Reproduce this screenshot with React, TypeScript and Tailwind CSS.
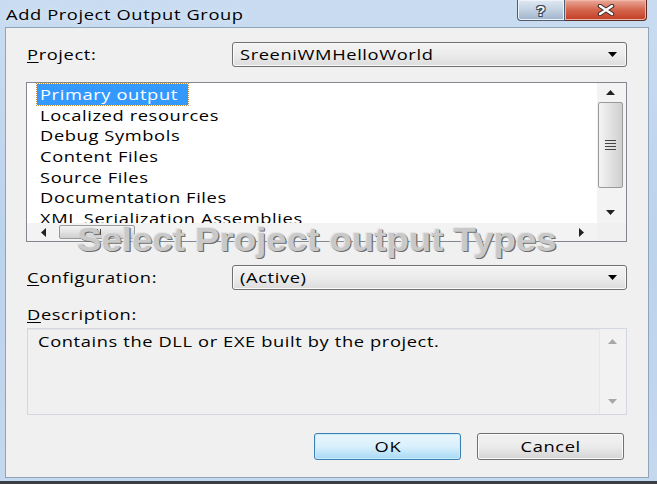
import type { ReactNode } from "react";

const items = [
  "Primary output",
  "Localized resources",
  "Debug Symbols",
  "Content Files",
  "Source Files",
  "Documentation Files",
  "XML Serialization Assemblies",
];

// the screenshot is stretched sideways, so the text gets widened to match
function T({ children, center = false }: { children: ReactNode; center?: boolean }) {
  return (
    <span className={`inline-block whitespace-nowrap scale-x-[1.22] ${center ? "origin-center" : "origin-left"}`}>
      {children}
    </span>
  );
}

function DownArrow({ color = "#000" }: { color?: string }) {
  return (
    <svg width="9" height="5" viewBox="0 0 9 5">
      <path d="M0 0h9L4.5 5z" fill={color} />
    </svg>
  );
}

function Combo({ value }: { value: string }) {
  return (
    <div className="flex h-[25px] flex-1 items-center justify-between rounded-[3px] border border-[#707070] bg-gradient-to-b from-[#f4f4f4] via-[#ececec] to-[#dcdcdc] pl-[7px] pr-[9px] shadow-[inset_0_0_0_1px_#fafafa]">
      <T>{value}</T>
      <DownArrow />
    </div>
  );
}

function Label({ first, rest }: { first: string; rest: string }) {
  return (
    <span className="w-[205px] shrink-0">
      <T>
        <span className="underline underline-offset-2">{first}</span>
        {rest}
      </T>
    </span>
  );
}

function ListBox() {
  return (
    <div className="ml-[-1px] grid h-[160px] grid-cols-[1fr_29px] grid-rows-[1fr_18px] border border-[#828790] bg-white">
      {/* items */}
      <div className="overflow-hidden pl-[10px] pt-[1px]">
        {items.map((item, i) => (
          <div key={item} className="h-[20.7px] leading-[20.7px] whitespace-nowrap">
            {i === 0 ? (
              <span className="inline-block w-[151px] bg-[#3399ff] pl-[3px] text-white outline-1 outline-dotted outline-[#c98a3a]">
                <T>{item}</T>
              </span>
            ) : (
              <span className="pl-[3px]">
                <T>{item}</T>
              </span>
            )}
          </div>
        ))}
      </div>
      {/* vertical scrollbar */}
      <div className="flex flex-col items-stretch bg-[#f3f3f3] pr-[2px]">
        <div className="flex h-[19px] items-center justify-center">
          <svg width="9" height="5" viewBox="0 0 9 5">
            <path d="M0 5h9L4.5 0z" fill="#222" />
          </svg>
        </div>
        <div className="mx-[1px] flex h-[86px] items-center justify-center rounded-[2px] border border-[#9a9a9a] bg-gradient-to-r from-[#f4f4f4] via-[#e2e2e2] to-[#cfcfcf]">
          <div className="flex flex-col gap-[2px]">
            <div className="h-[1px] w-[11px] bg-[#444]" />
            <div className="h-[1px] w-[11px] bg-[#444]" />
            <div className="h-[1px] w-[11px] bg-[#444]" />
            <div className="h-[1px] w-[11px] bg-[#444]" />
          </div>
        </div>
        <div className="flex flex-1 items-end justify-center pb-[8px]">
          <DownArrow color="#222" />
        </div>
      </div>
      {/* horizontal scrollbar */}
      <div className="flex items-center bg-[#f3f3f3]">
        <div className="flex w-[32px] justify-center">
          <svg width="5" height="9" viewBox="0 0 5 9">
            <path d="M5 0v9L0 4.5z" fill="#222" />
          </svg>
        </div>
        <div className="flex h-[14px] w-[76px] items-center justify-center gap-[2px] rounded-[2px] border border-[#9a9a9a] bg-gradient-to-b from-[#f4f4f4] via-[#e2e2e2] to-[#cfcfcf]">
          <div className="h-[6px] w-[1px] bg-[#444]" />
          <div className="h-[6px] w-[1px] bg-[#444]" />
          <div className="h-[6px] w-[1px] bg-[#444]" />
        </div>
        <div className="flex-1" />
        <div className="flex w-[32px] justify-center">
          <svg width="5" height="9" viewBox="0 0 5 9">
            <path d="M0 0v9L5 4.5z" fill="#222" />
          </svg>
        </div>
      </div>
      <div className="bg-[#f0f0f0]" />
    </div>
  );
}

function DescriptionBox() {
  return (
    <div className="flex h-[87px] border border-[#d3d8de] bg-[#f0f0f0] shadow-[inset_0_1px_0_#e4e4e4]">
      <div className="flex-1 pl-[10px] pt-[1px]">
        <T>Contains the DLL or EXE built by the project.</T>
      </div>
      <div className="flex w-[27px] flex-col items-center justify-between border-l border-[#e6e6e6] bg-[#f2f2f2] py-[10px] pr-[1px]">
        <svg width="9" height="5" viewBox="0 0 9 5">
          <path d="M0 5h9L4.5 0z" fill="#a8a8a8" />
        </svg>
        <DownArrow color="#a8a8a8" />
      </div>
    </div>
  );
}

export default function App() {
  return (
    <div className="relative flex h-[484px] w-[657px] flex-col overflow-hidden border-b-[3px] border-[#3b3f45] bg-gradient-to-b from-[#c9dcf1] via-[#bcd3ec] to-[#c4d8ee] pb-[3px] pl-[5px] pr-[8px] font-['Open_Sans',sans-serif] text-[15px] tracking-[0.5px] text-black">
      {/* title bar */}
      <div className="flex h-[27px] shrink-0 items-start">
        <span className="ml-[1px] mt-[4px] leading-[20px] [text-shadow:0_0_6px_#e8f1fb]">
          <T>Add Project Output Group</T>
        </span>
        <div className="ml-auto mr-[2px] flex h-[21px]">
          <div className="flex w-[48px] items-center justify-center rounded-bl-[4px] border border-t-0 border-[#4f5d70] bg-gradient-to-b from-[#dfe8f2] via-[#c2d1e2] to-[#9fb3cb] shadow-[inset_0_0_0_1px_#eef3f9]">
            <span className="font-['Liberation_Sans',sans-serif] text-[15px] font-bold leading-none text-[#f4f7fb] [text-shadow:0_0_1px_#2f3b4b,1px_1px_0_#3a4658,-1px_-1px_0_#3a4658,1px_-1px_0_#3a4658,-1px_1px_0_#3a4658]">
              ?
            </span>
          </div>
          <div className="flex w-[82px] items-center justify-center rounded-br-[4px] border border-l-0 border-t-0 border-[#5a2a22] bg-gradient-to-b from-[#e9a99a] via-[#d4644c] to-[#c33c24] shadow-[inset_0_0_0_1px_#f0b6a8]">
            <svg width="18" height="12" viewBox="0 0 18 12">
              <path d="M3 2l12 8M15 2L3 10" stroke="#3a2a2a" strokeWidth="4.5" strokeLinecap="round" />
              <path d="M3 2l12 8M15 2L3 10" stroke="#fff" strokeWidth="2.5" strokeLinecap="round" />
            </svg>
          </div>
        </div>
      </div>

      {/* client area */}
      <div className="flex flex-1 flex-col border border-[#8fa3ba] bg-[#f0f0f0] px-[21px] pt-[14px]">
        <div className="flex h-[25px] items-center">
          <Label first="P" rest="roject:" />
          <Combo value="SreeniWMHelloWorld" />
        </div>

        <div className="mt-[15px]">
          <ListBox />
        </div>

        <div className="mt-[23px] flex h-[25px] items-center">
          <Label first="C" rest="onfiguration:" />
          <Combo value="(Active)" />
        </div>

        <div className="mt-[14px] h-[20px] leading-[20px]">
          <T>
            <span className="underline underline-offset-2">D</span>escription:
          </T>
        </div>

        <div className="mt-[4px]">
          <DescriptionBox />
        </div>

        <div className="mr-[3px] mt-[18px] flex justify-end gap-[16px]">
          <button className="flex h-[27px] w-[147px] items-center justify-center rounded-[3px] border border-[#3c7fb1] bg-gradient-to-b from-[#eaf6fd] via-[#d9f0fc] to-[#a7d9f5] shadow-[inset_0_0_0_1px_#c7ecfc]">
            <T center>OK</T>
          </button>
          <button className="flex h-[27px] w-[147px] items-center justify-center rounded-[3px] border border-[#707070] bg-gradient-to-b from-[#f2f2f2] via-[#ebebeb] to-[#d4d4d4] shadow-[inset_0_0_0_1px_#fbfbfb]">
            <T center>Cancel</T>
          </button>
        </div>
      </div>

      {/* watermark caption laid over the dialog */}
      <div className="pointer-events-none absolute left-[77px] top-[215px] origin-left scale-x-[1.11] whitespace-nowrap font-['Liberation_Sans',sans-serif] text-[33px] font-bold tracking-normal text-[#c9c9c9] [text-shadow:1px_1px_0_#6e6e6e,-1px_-1px_0_#e6e6e6,0_0_1px_#7a7a7a]">
        Select Project output Types
      </div>
    </div>
  );
}
